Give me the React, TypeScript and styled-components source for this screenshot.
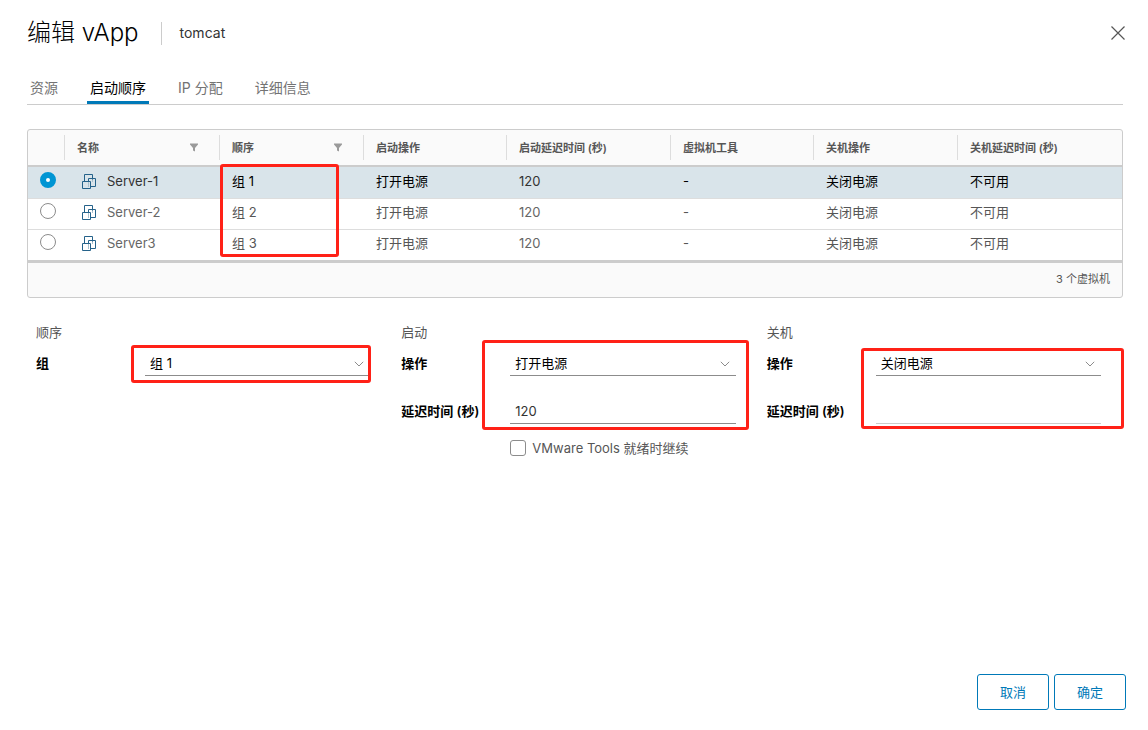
import React, { useState } from "react";
import styled, { createGlobalStyle } from "styled-components";

const GlobalStyle = createGlobalStyle`
  * { box-sizing: border-box; }
  body {
    margin: 0;
    background: #fff;
    color: #565656;
    font: 13px/20px Inter, "Noto Sans CJK SC", sans-serif;
  }
  button, input, select { font: inherit; color: inherit; }
`;

const Dialog = styled.main`
  display: flex;
  flex-direction: column;
  min-height: 100vh;
  padding: 16px 22px 20px 27px;
`;

const Header = styled.header`
  display: flex;
  align-items: center;
  height: 34px;
`;

const Title = styled.h1`
  margin: 0;
  padding-right: 22px;
  font-size: 24px;
  font-weight: 300;
  line-height: 32px;
  color: #000;
`;

const Subtitle = styled.span`
  display: flex;
  align-items: center;
  height: 23px;
  padding-left: 18px;
  border-left: 1px solid #ccc;
  font-size: 14px;
  color: #333;
`;

const CloseButton = styled.button`
  display: flex;
  margin-left: auto;
  padding: 0;
  border: 0;
  background: none;
  color: #565656;
  cursor: pointer;
`;

const Body = styled.div`
  padding-right: 3px;
`;

const Tabs = styled.nav`
  display: flex;
  gap: 26px;
  margin-top: 22px;
  border-bottom: 1px solid #ccc;
`;

const Tab = styled.button<{ $active: boolean }>`
  height: 32px;
  padding: 2px 3px 0;
  border: 0;
  border-bottom: 3px solid ${(p) => (p.$active ? "#0079b8" : "transparent")};
  background: none;
  font-size: 14px;
  color: ${(p) => (p.$active ? "#000" : "#737373")};
  cursor: pointer;
`;

const Grid = styled.section`
  margin-top: 24px;
  border: 1px solid #ccc;
  border-radius: 3px;
  background: #fafafa;
`;

const Table = styled.table`
  width: 100%;
  table-layout: fixed;
  border-spacing: 0;
`;

const Column = styled.col<{ $share: number }>`
  width: ${(p) => (p.$share / 1094) * 100}%;
`;

const HeadCell = styled.th`
  height: 37px;
  padding: 0;
  border-bottom: 2px solid #ccc;
  text-align: left;
  font-size: 11px;
  font-weight: 600;
`;

const HeadLabel = styled.div`
  display: flex;
  align-items: center;
  justify-content: space-between;
  height: 25px;
  padding: 0 21px 0 12px;
  border-left: 1px solid #ddd;
  white-space: nowrap;
`;

const Row = styled.tr<{ $selected: boolean }>`
  background: ${(p) => (p.$selected ? "#d9e4ea" : "#fff")};
  color: ${(p) => (p.$selected ? "#000" : "#565656")};
  --line: ${(p) => (p.$selected ? "#d9e4ea" : "#ddd")};
  --latin: ${(p) => (p.$selected ? "#333" : "#666")};
`;

const Cell = styled.td`
  position: relative;
  height: 31px;
  padding: 3px 0 7px 13px;
  border-top: 1px solid var(--line);
  vertical-align: top;
  line-height: 20px;
`;

const NumberCell = styled(Cell)`
  color: var(--latin);
`;

const RadioCell = styled(Cell)`
  padding: 4px 0 0 12px;
`;

const Radio = styled.input`
  display: block;
  appearance: none;
  width: 16px;
  height: 16px;
  margin: 0;
  border: 1px solid #8c8c8c;
  border-radius: 50%;
  background: #fff;

  &:checked {
    border: 6px solid #0095d3;
  }
`;

const VmName = styled.div`
  display: flex;
  align-items: center;
  gap: 10px;
  padding-left: 4px;
  color: var(--latin);
`;

const GridFooter = styled.footer`
  height: 37px;
  padding: 6px 12px 0 0;
  border-top: 3px solid #ccc;
  text-align: right;
  font-size: 11px;
`;

const Form = styled.form`
  display: grid;
  grid-template-columns: repeat(3, 1fr);
  margin-top: 24px;
`;

const Group = styled.fieldset`
  min-width: 0;
  margin: 0;
  padding: 0 22px 0 9px;
  border: 0;
`;

const Legend = styled.legend`
  padding: 0;
  line-height: 20px;
`;

const Fields = styled.div`
  position: relative;
  display: grid;
  grid-template-columns: 109px 1fr;
  row-gap: 24px;
  margin-top: 10px;
`;

const Label = styled.label`
  font-weight: 600;
  line-height: 22px;
  white-space: nowrap;
  color: #000;
`;

const SelectBox = styled.div`
  position: relative;
  min-width: 0;
`;

const Select = styled.select`
  display: block;
  appearance: none;
  width: 100%;
  height: 24px;
  padding: 0 24px 2px 5px;
  border: 0;
  border-bottom: 1px solid #8c8c8c;
  border-radius: 0;
  background: none;
  color: #000;
`;

const Caret = styled.svg`
  position: absolute;
  right: 6px;
  top: 9px;
  pointer-events: none;
`;

const TextInput = styled.input`
  width: 100%;
  min-width: 0;
  height: 24px;
  padding: 0 5px 2px;
  border: 0;
  border-bottom: 1px solid #8c8c8c;
  background: none;
  color: #333;

  &:disabled {
    border-color: #ccc;
  }
`;

const CheckRow = styled.div`
  display: flex;
  align-items: center;
  gap: 6px;
  margin: 14px 0 0 109px;
`;

const Checkbox = styled.input`
  appearance: none;
  width: 16px;
  height: 16px;
  margin: 0;
  border: 1px solid #8c8c8c;
  border-radius: 3px;
  background: #fff;

  &:checked {
    background: #0095d3;
  }
`;

const Highlight = styled.span<{ $left: number; $top: number; $width: number; $height: number }>`
  position: absolute;
  z-index: 1;
  left: ${(p) => p.$left}px;
  top: ${(p) => p.$top}px;
  width: ${(p) => p.$width}px;
  height: ${(p) => p.$height}px;
  border: 3px solid #ff2117;
  border-radius: 3px;
  pointer-events: none;
`;

const Actions = styled.footer`
  display: flex;
  justify-content: flex-end;
  gap: 5px;
  margin-top: auto;
`;

const ActionButton = styled.button`
  min-width: 72px;
  height: 36px;
  padding: 0 12px;
  border: 1px solid #0079b8;
  border-radius: 3px;
  background: #fff;
  color: #0079b8;
  cursor: pointer;
`;

const FilterIcon = () => (
  <svg width="8" height="9" viewBox="0 0 8 9" fill="#9a9a9a" aria-hidden="true">
    <path d="M0 0.5h8v1L5 5v3.5L3 7.5V5L0 1.5z" />
  </svg>
);

const VmIcon = () => (
  <svg width="16" height="16" viewBox="0 0 16 16" fill="none" stroke="#25628a" aria-hidden="true">
    <path d="M7.5 9v5M11.5 6v3" stroke="#a9c0ce" />
    <path d="M3.5 8.5v-7h8v5" />
    <path d="M7.5 8.5v-3h7v8h-5" />
    <path d="M1.5 8.5h8v7h-8z" />
  </svg>
);

const columns = [
  { label: "名称", share: 155, filter: true },
  { label: "顺序", share: 144, filter: true },
  { label: "启动操作", share: 143 },
  { label: "启动延迟时间 (秒)", share: 164 },
  { label: "虚拟机工具", share: 143 },
  { label: "关机操作", share: 144 },
  { label: "关机延迟时间 (秒)", share: 165 },
];

const machines = [
  { name: "Server-1", group: "组 1" },
  { name: "Server-2", group: "组 2" },
  { name: "Server3", group: "组 3" },
];

const tabs = ["资源", "启动顺序", "IP 分配", "详细信息"];

function SelectField({ id, label, options }: { id: string; label: string; options: string[] }) {
  return (
    <>
      <Label htmlFor={id}>{label}</Label>
      <SelectBox>
        <Select id={id}>
          {options.map((o) => (
            <option key={o}>{o}</option>
          ))}
        </Select>
        <Caret width="10" height="6" viewBox="0 0 10 6" fill="none" stroke="#8c8c8c">
          <path d="M0.8 0.8L5 5L9.2 0.8" />
        </Caret>
      </SelectBox>
    </>
  );
}

export default function App() {
  const [tab, setTab] = useState("启动顺序");
  const [selected, setSelected] = useState("Server-1");

  return (
    <Dialog>
      <GlobalStyle />
      <Header>
        <Title>编辑 vApp</Title>
        <Subtitle>tomcat</Subtitle>
        <CloseButton type="button" aria-label="关闭">
          <svg width="16" height="16" viewBox="0 0 16 16" fill="none" stroke="currentColor" strokeWidth="1.2">
            <path d="M1.5 1.5l13 13M14.5 1.5l-13 13" />
          </svg>
        </CloseButton>
      </Header>
      <Body>
        <Tabs>
          {tabs.map((t) => (
            <Tab key={t} type="button" $active={t === tab} onClick={() => setTab(t)}>
              {t}
            </Tab>
          ))}
        </Tabs>
        <Grid>
          <Table>
            <colgroup>
              <Column $share={36} />
              {columns.map((c) => (
                <Column key={c.label} $share={c.share} />
              ))}
            </colgroup>
            <thead>
              <tr>
                <HeadCell />
                {columns.map((c) => (
                  <HeadCell key={c.label} scope="col">
                    <HeadLabel>
                      {c.label}
                      {c.filter && <FilterIcon />}
                    </HeadLabel>
                  </HeadCell>
                ))}
              </tr>
            </thead>
            <tbody>
              {machines.map((m, i) => (
                <Row key={m.name} $selected={m.name === selected}>
                  <RadioCell>
                    <Radio
                      type="radio"
                      name="vm"
                      aria-label={m.name}
                      checked={m.name === selected}
                      onChange={() => setSelected(m.name)}
                    />
                  </RadioCell>
                  <Cell>
                    <VmName>
                      <VmIcon />
                      {m.name}
                    </VmName>
                  </Cell>
                  <Cell>
                    {m.group}
                    {i === 0 && <Highlight $left={1} $top={-4} $width={119} $height={93} />}
                  </Cell>
                  <Cell>打开电源</Cell>
                  <NumberCell>120</NumberCell>
                  <Cell>-</Cell>
                  <Cell>关闭电源</Cell>
                  <Cell>不可用</Cell>
                </Row>
              ))}
            </tbody>
          </Table>
          <GridFooter>3 个虚拟机</GridFooter>
        </Grid>
        <Form>
          <Group>
            <Legend>顺序</Legend>
            <Fields>
              <SelectField id="group" label="组" options={["组 1", "组 2", "组 3"]} />
              <Highlight $left={95} $top={-7} $width={240} $height={38} />
            </Fields>
          </Group>
          <Group>
            <Legend>启动</Legend>
            <Fields>
              <SelectField id="start-action" label="操作" options={["打开电源", "无"]} />
              <Label htmlFor="start-delay">延迟时间 (秒)</Label>
              <TextInput id="start-delay" defaultValue="120" />
              <Highlight $left={81} $top={-12} $width={267} $height={90} />
            </Fields>
            <CheckRow>
              <Checkbox type="checkbox" id="tools-ready" />
              <label htmlFor="tools-ready">VMware Tools 就绪时继续</label>
            </CheckRow>
          </Group>
          <Group>
            <Legend>关机</Legend>
            <Fields>
              <SelectField id="stop-action" label="操作" options={["关闭电源", "挂起"]} />
              <Label htmlFor="stop-delay">延迟时间 (秒)</Label>
              <TextInput id="stop-delay" disabled />
              <Highlight $left={94} $top={-4} $width={263} $height={81} />
            </Fields>
          </Group>
        </Form>
      </Body>
      <Actions>
        <ActionButton type="button">取消</ActionButton>
        <ActionButton type="button">确定</ActionButton>
      </Actions>
    </Dialog>
  );
}
